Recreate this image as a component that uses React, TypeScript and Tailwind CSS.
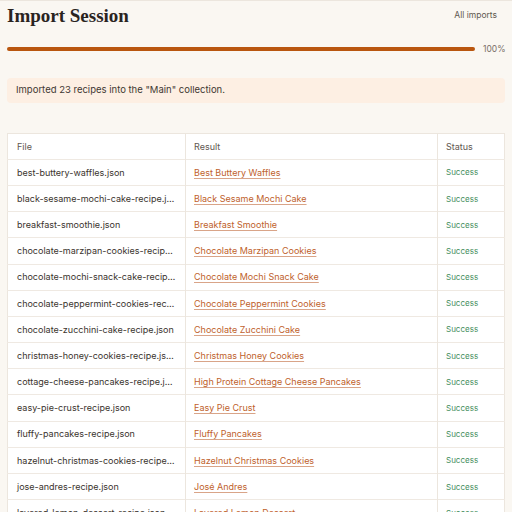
const rows: [string, string][] = [
  ['best-buttery-waffles.json', 'Best Buttery Waffles'],
  ['black-sesame-mochi-cake-recipe.json', 'Black Sesame Mochi Cake'],
  ['breakfast-smoothie.json', 'Breakfast Smoothie'],
  ['chocolate-marzipan-cookies-recipe.json', 'Chocolate Marzipan Cookies'],
  ['chocolate-mochi-snack-cake-recipe.json', 'Chocolate Mochi Snack Cake'],
  ['chocolate-peppermint-cookies-recipe.json', 'Chocolate Peppermint Cookies'],
  ['chocolate-zucchini-cake-recipe.json', 'Chocolate Zucchini Cake'],
  ['christmas-honey-cookies-recipe.json', 'Christmas Honey Cookies'],
  ['cottage-cheese-pancakes-recipe.json', 'High Protein Cottage Cheese Pancakes'],
  ['easy-pie-crust-recipe.json', 'Easy Pie Crust'],
  ['fluffy-pancakes-recipe.json', 'Fluffy Pancakes'],
  ['hazelnut-christmas-cookies-recipe.json', 'Hazelnut Christmas Cookies'],
  ['jose-andres-recipe.json', 'José Andres'],
  ['layered-lemon-dessert-recipe.json', 'Layered Lemon Dessert'],
  ['lemon-ricotta-pancakes.json', 'Lemon Ricotta Pancakes'],
  ['miso-banana-bread.json', 'Miso Banana Bread'],
];

export default function App() {
  return (
    <div
      className="min-h-screen border-t border-[#ece6de] bg-[#faf7f2] px-[7px] text-[#3a332d]"
      style={{ fontFamily: 'Inter, "Noto Sans", sans-serif' }}
    >
      <div className="flex h-[29px] items-center justify-between">
        <h1
          className="text-[19px] font-bold leading-none text-[#2a241f]"
          style={{ fontFamily: '"Liberation Serif", serif' }}
        >
          Import Session
        </h1>
        <span className="pr-[8px] text-[8.5px] text-[#5f5750]">All imports</span>
      </div>

      <div className="mt-[13px] flex items-center gap-[8px]">
        <div className="h-[4px] flex-1 rounded-full bg-[#b9560f]" />
        <span className="w-[22px] text-[8.5px] text-[#7a7068]">100%</span>
      </div>

      <div className="mt-[22px] flex h-[25px] items-center rounded-[4px] bg-[#fdefe3] px-[9px] text-[9.5px] text-[#3f3832]">
        Imported 23 recipes into the "Main" collection.
      </div>

      <table className="mt-[30px] w-full table-fixed border-collapse border border-[#ece6de] bg-white text-[9px]">
        <colgroup>
          <col className="w-[178px]" />
          <col className="w-[252px]" />
          <col />
        </colgroup>
        <thead>
          <tr className="h-[26px] text-left text-[#5f5750]">
            <th className="border-r border-[#ece6de] px-[9px] font-normal">File</th>
            <th className="border-r border-[#ece6de] px-[8px] font-normal">Result</th>
            <th className="px-[8px] font-normal">Status</th>
          </tr>
        </thead>
        <tbody>
          {rows.map(([file, title]) => (
            <tr key={file} className="h-[26.2px] border-t border-[#efe9e2]">
              <td className="truncate border-r border-[#ece6de] px-[9px]">{file}</td>
              <td className="border-r border-[#ece6de] px-[8px]">
                <a className="text-[#c05f2c] underline decoration-[#d9a488] underline-offset-2">{title}</a>
              </td>
              <td className="px-[8px] text-[8px] text-[#3f8d5c]">Success</td>
            </tr>
          ))}
        </tbody>
      </table>
    </div>
  );
}
